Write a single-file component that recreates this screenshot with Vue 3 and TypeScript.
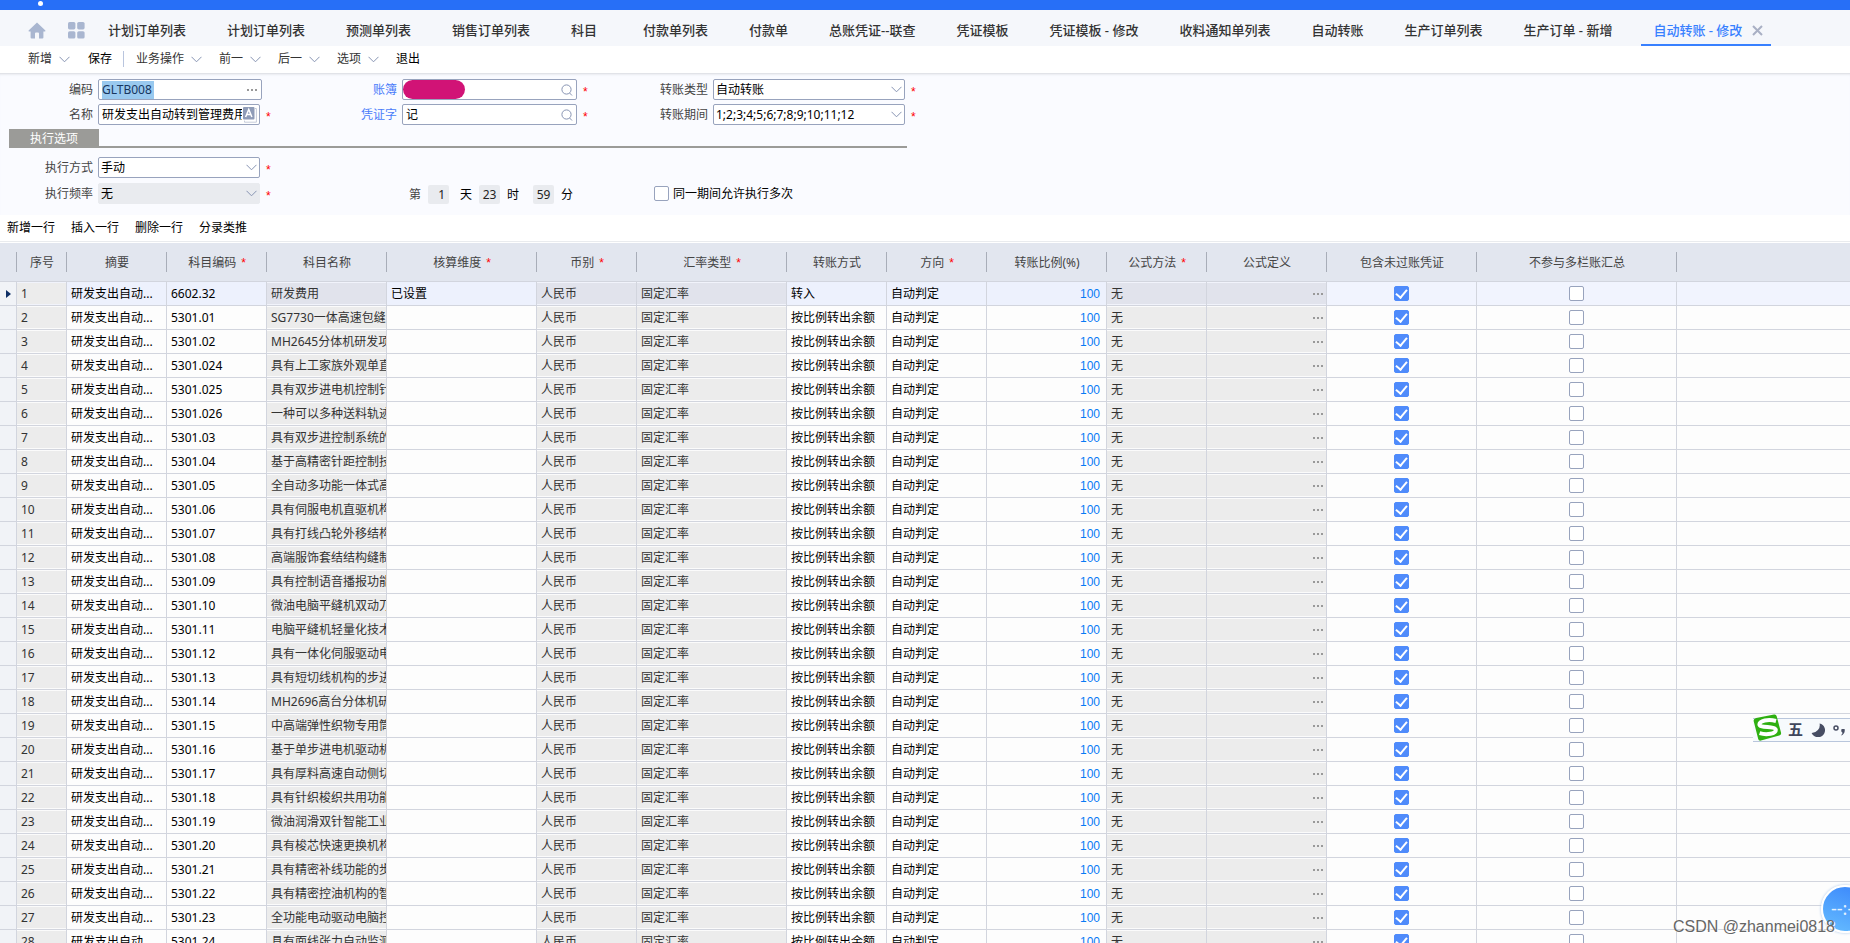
<script setup lang="ts">
import { ref } from 'vue'

interface Column {
  title: string
  width?: number
  required?: boolean
}

interface Entry {
  code: string
  name: string
  mode: string
  dimension: string
  includeUnposted: boolean
  excludeLedger: boolean
}

const tabs: string[] = [
  '计划订单列表', '计划订单列表', '预测单列表', '销售订单列表', '科目', '付款单列表', '付款单',
  '总账凭证--联查', '凭证模板', '凭证模板 - 修改', '收料通知单列表', '自动转账', '生产订单列表',
  '生产订单 - 新增', '自动转账 - 修改',
]
const activeTab = ref(tabs.length - 1)

const actions: { label: string; menu: boolean; divided?: boolean; strong?: boolean }[] = [
  { label: '新增', menu: true },
  { label: '保存', menu: false, divided: true, strong: true },
  { label: '业务操作', menu: true },
  { label: '前一', menu: true },
  { label: '后一', menu: true },
  { label: '选项', menu: true },
  { label: '退出', menu: false, strong: true },
]

const rowActions: string[] = ['新增一行', '插入一行', '删除一行', '分录类推']

const code = ref('GLTB008')
const title = ref('研发支出自动转到管理费用')
const book = ref('')
const voucher = ref('记')
const transferType = ref('自动转账')
const period = ref('1;2;3;4;5;6;7;8;9;10;11;12')
const execMode = ref('手动')
const frequency = ref('无')
const repeatable = ref(false)

const columns: Column[] = [
  { title: '序号', width: 50 },
  { title: '摘要', width: 100 },
  { title: '科目编码', width: 100, required: true },
  { title: '科目名称', width: 120 },
  { title: '核算维度', width: 150, required: true },
  { title: '币别', width: 100, required: true },
  { title: '汇率类型', width: 150, required: true },
  { title: '转账方式', width: 100 },
  { title: '方向', width: 100, required: true },
  { title: '转账比例(%)', width: 120 },
  { title: '公式方法', width: 100, required: true },
  { title: '公式定义', width: 120 },
  { title: '包含未过账凭证', width: 150 },
  { title: '不参与多栏账汇总', width: 200 },
]

const accounts: [string, string][] = [
  ['6602.32', '研发费用'],
  ['5301.01', 'SG7730一体高速包缝'],
  ['5301.02', 'MH2645分体机研发项'],
  ['5301.024', '具有上工家族外观单直'],
  ['5301.025', '具有双步进电机控制针'],
  ['5301.026', '一种可以多种送料轨迹'],
  ['5301.03', '具有双步进控制系统的'],
  ['5301.04', '基于高精密针距控制技'],
  ['5301.05', '全自动多功能一体式高'],
  ['5301.06', '具有伺服电机直驱机构'],
  ['5301.07', '具有打线凸轮外移结构'],
  ['5301.08', '高端服饰套结结构缝制'],
  ['5301.09', '具有控制语音播报功能'],
  ['5301.10', '微油电脑平缝机双动刀'],
  ['5301.11', '电脑平缝机轻量化技术'],
  ['5301.12', '具有一体化伺服驱动电'],
  ['5301.13', '具有短切线机构的步进'],
  ['5301.14', 'MH2696高台分体机研'],
  ['5301.15', '中高端弹性织物专用筒'],
  ['5301.16', '基于单步进电机驱动机'],
  ['5301.17', '具有厚料高速自动侧切'],
  ['5301.18', '具有针织梭织共用功能'],
  ['5301.19', '微油润滑双针智能工业'],
  ['5301.20', '具有梭芯快速更换机构'],
  ['5301.21', '具有精密补线功能的步'],
  ['5301.22', '具有精密控油机构的智'],
  ['5301.23', '全功能电动驱动电脑控'],
  ['5301.24', '具有面线张力自动监测'],
]

const entries = ref<Entry[]>(
  accounts.map(([accountCode, name], i) => ({
    code: accountCode,
    name,
    mode: i === 0 ? '转入' : '按比例转出余额',
    dimension: i === 0 ? '已设置' : '',
    includeUnposted: true,
    excludeLedger: false,
  })),
)
const current = ref(0)
</script>

<template>
  <div class="app">
    <div class="topbar"><span class="topbar-dot"></span></div>

    <nav class="tabs">
      <button class="nav-icon" type="button" aria-label="首页">
        <svg width="18" height="17" viewBox="0 0 18 17"><path d="M9 0.5 L17.4 8.4 Q17.8 9.4 16.8 9.4 H15.4 V15.4 Q15.4 16.4 14.4 16.4 H11 V11.6 Q11 10.6 10 10.6 H8 Q7 10.6 7 11.6 V16.4 H3.6 Q2.6 16.4 2.6 15.4 V9.4 H1.2 Q0.2 9.4 0.6 8.4 Z" /></svg>
      </button>
      <button class="nav-icon" type="button" aria-label="应用">
        <svg width="17" height="17" viewBox="0 0 17 17"><rect width="7.4" height="7.4" rx="1.6" /><rect x="9.2" width="7.4" height="7.4" rx="1.6" /><rect y="9.2" width="7.4" height="7.4" rx="1.6" /><rect x="9.2" y="9.2" width="7.4" height="7.4" rx="1.6" /></svg>
      </button>
      <div class="tab-list">
        <button v-for="(tab, i) in tabs" :key="i" type="button" class="tab" :class="{ active: i === activeTab }" @click="activeTab = i">
          {{ tab }}
          <svg v-if="i === activeTab" class="tab-close" width="11" height="11" viewBox="0 0 11 11"><path d="M1 1 L10 10 M10 1 L1 10" /></svg>
        </button>
      </div>
    </nav>

    <div class="toolbar">
      <button v-for="a in actions" :key="a.label" type="button" class="tool" :class="{ divided: a.divided, strong: a.strong }">
        {{ a.label }}
        <svg v-if="a.menu" class="chevron" width="11" height="7" viewBox="0 0 11 7"><path d="M0.5 0.8 L5.5 5.8 L10.5 0.8" /></svg>
      </button>
    </div>

    <form class="form" @submit.prevent>
      <div class="fields">
        <div class="field first">
          <label for="code">编码</label>
          <div class="control code">
            <input id="code" v-model="code" class="selected" type="text" />
            <button class="more" type="button" aria-label="更多"><i></i><i></i><i></i></button>
          </div>
        </div>
        <div class="field second">
          <label for="book" class="link">账簿</label>
          <div class="control">
            <span class="mask"></span>
            <input id="book" v-model="book" type="text" />
            <svg class="search" width="12" height="12" viewBox="0 0 12 12"><circle cx="5.5" cy="5.5" r="4.6" /><path d="M8.6 9 L11 11.5" /></svg>
          </div>
          <span class="star">*</span>
        </div>
        <div class="field third">
          <label for="type">转账类型</label>
          <div class="control">
            <select id="type" v-model="transferType"><option>自动转账</option></select>
            <svg class="chevron" width="11" height="7" viewBox="0 0 11 7"><path d="M0.5 0.8 L5.5 5.8 L10.5 0.8" /></svg>
          </div>
          <span class="star">*</span>
        </div>

        <div class="field first">
          <label for="title">名称</label>
          <div class="control name">
            <input id="title" v-model="title" type="text" />
            <svg class="lang" width="15" height="17" viewBox="0 0 15 17"><path class="lang-page" d="M13 2.5 H14.4 V16.2 H2.5 V14.6" /><rect x="1" y="1" width="11.5" height="12.5" rx="1" /><path class="lang-mark" d="M3.6 11 L6.75 3.4 L9.9 11 M4.8 8.4 H8.7" /></svg>
          </div>
          <span class="star">*</span>
        </div>
        <div class="field second">
          <label for="voucher" class="link">凭证字</label>
          <div class="control">
            <input id="voucher" v-model="voucher" type="text" />
            <svg class="search" width="12" height="12" viewBox="0 0 12 12"><circle cx="5.5" cy="5.5" r="4.6" /><path d="M8.6 9 L11 11.5" /></svg>
          </div>
          <span class="star">*</span>
        </div>
        <div class="field third">
          <label for="period">转账期间</label>
          <div class="control">
            <select id="period" v-model="period"><option>1;2;3;4;5;6;7;8;9;10;11;12</option></select>
            <svg class="chevron" width="11" height="7" viewBox="0 0 11 7"><path d="M0.5 0.8 L5.5 5.8 L10.5 0.8" /></svg>
          </div>
          <span class="star">*</span>
        </div>
      </div>

      <div class="section"><h2>执行选项</h2></div>

      <div class="fields options">
        <div class="field first">
          <label for="mode">执行方式</label>
          <div class="control">
            <select id="mode" v-model="execMode"><option>手动</option></select>
            <svg class="chevron" width="11" height="7" viewBox="0 0 11 7"><path d="M0.5 0.8 L5.5 5.8 L10.5 0.8" /></svg>
          </div>
          <span class="star">*</span>
        </div>
        <div class="field first frequency">
          <label for="frequency">执行频率</label>
          <div class="control disabled">
            <select id="frequency" v-model="frequency" disabled><option>无</option></select>
            <svg class="chevron" width="11" height="7" viewBox="0 0 11 7"><path d="M0.5 0.8 L5.5 5.8 L10.5 0.8" /></svg>
          </div>
          <span class="star">*</span>
        </div>
        <div class="schedule">
          <span class="unit muted">第</span>
          <input class="num end" type="text" value="1" aria-label="天" readonly />
          <span class="unit">天</span>
          <input class="num" type="text" value="23" aria-label="时" readonly />
          <span class="unit hour">时</span>
          <input class="num" type="text" value="59" aria-label="分" readonly />
          <span class="unit">分</span>
        </div>
        <label class="repeat"><input v-model="repeatable" type="checkbox" class="tick" />同一期间允许执行多次</label>
      </div>
    </form>

    <div class="row-actions">
      <button v-for="a in rowActions" :key="a" type="button">{{ a }}</button>
    </div>

    <div class="grid">
      <table>
        <colgroup>
          <col class="col-mark" />
          <col v-for="c in columns" :key="c.title" :style="{ width: c.width + 'px' }" />
          <col />
        </colgroup>
        <thead>
          <tr>
            <th></th>
            <th v-for="c in columns" :key="c.title"><span>{{ c.title }}<b v-if="c.required">*</b></span></th>
            <th class="rest"></th>
          </tr>
        </thead>
        <tbody>
          <tr v-for="(e, i) in entries" :key="e.code" :class="{ current: i === current }" @click="current = i">
            <td class="mark"><svg v-if="i === current" width="5" height="8" viewBox="0 0 5 8"><path d="M0 0 L5 4 L0 8 Z" /></svg></td>
            <td class="locked index">{{ i + 1 }}</td>
            <td class="edit">研发支出自动...</td>
            <td class="edit">{{ e.code }}</td>
            <td class="locked">{{ e.name }}</td>
            <td class="edit">{{ e.dimension }}</td>
            <td class="locked">人民币</td>
            <td class="locked">固定汇率</td>
            <td class="edit">{{ e.mode }}</td>
            <td class="edit">自动判定</td>
            <td class="ratio">100</td>
            <td class="locked">无</td>
            <td class="locked formula"><button class="more" type="button" aria-label="公式定义"><i></i><i></i><i></i></button></td>
            <td class="check"><input v-model="e.includeUnposted" type="checkbox" class="tick" aria-label="包含未过账凭证" /></td>
            <td class="check"><input v-model="e.excludeLedger" type="checkbox" class="tick" aria-label="不参与多栏账汇总" /></td>
            <td class="rest"></td>
          </tr>
        </tbody>
      </table>
    </div>

    <div class="ime">
      <svg class="ime-logo" width="29" height="28" viewBox="0 0 29 28"><path class="ime-tile" d="M3.2 4 L21 0.6 Q23.2 0.2 23.7 2.2 L28 18.6 Q28.6 21 26.2 21.6 L8 26.6 Q5.8 27.2 5.2 25 L0.7 7.2 Q0.2 4.6 3.2 4 Z" /><path class="ime-curve" d="M23 7 C15 4.8 6.6 6.8 6.4 10.4 C6.2 14.4 22.4 11.8 22.8 15.8 C23 19.8 13.6 21.4 6.6 19.2" /></svg>
      <span class="ime-text">五</span>
      <svg width="14" height="14" viewBox="0 0 14 14"><path class="ime-ink" d="M8.6 0.4 A7 7 0 1 1 0.6 10 A8 8 0 0 0 8.6 0.4 Z" /></svg>
      <svg width="13" height="13" viewBox="0 0 13 13"><circle class="ime-ring" cx="3" cy="4" r="2" /><path class="ime-ink" d="M8.6 5 H11.6 Q12.6 8.6 8.8 11.6 L8.2 11 Q9.8 9.6 9.4 8.4 Q7.6 8 8.6 5 Z" /></svg>
    </div>
    <div class="bubble">--:--</div>
    <div class="credit">CSDN @zhanmei0818</div>
  </div>
</template>

<style>
html,
body {
  overflow: hidden;
}
</style>

<style scoped>
.app {
  position: relative;
  display: flex;
  flex-direction: column;
  height: 100vh;
  overflow: hidden;
  background: #fff;
  color: #000;
  font: 12px/16px "Noto Sans", "Noto Sans CJK SC", sans-serif;
}
.app * {
  box-sizing: border-box;
}
button,
input,
select {
  margin: 0;
  padding: 0;
  border: 0;
  background: none;
  color: inherit;
  font: inherit;
}
svg {
  flex: none;
}
.topbar {
  flex: none;
  height: 10px;
  padding: 1px 0 0 38px;
  background: #276ff7;
}
.topbar-dot {
  display: block;
  width: 5px;
  height: 5px;
  border-radius: 50%;
  background: #fff;
}
.tabs {
  flex: none;
  display: flex;
  align-items: center;
  height: 36px;
  padding-left: 28px;
  background: #f5f7fb;
}
.nav-icon {
  display: flex;
  margin-right: 22px;
  padding-top: 4px;
  fill: #a9b6d0;
}
.nav-icon + .nav-icon {
  margin-right: 0;
}
.tab-list {
  display: flex;
  gap: 1px;
  height: 100%;
  margin-left: 11px;
}
.tab {
  display: flex;
  align-items: center;
  min-width: 71px;
  padding: 6px 28px 0 12px;
  border-bottom: 2px solid transparent;
  color: #333;
  font-size: 13px;
  font-weight: 500;
  line-height: 20px;
  white-space: nowrap;
}
.tab.active {
  padding-right: 8px;
  border-color: #3880ff;
  color: #3880ff;
}
.tab-close {
  margin-left: 10px;
  stroke: #a9b0c4;
  stroke-width: 2;
}
.toolbar {
  flex: none;
  display: flex;
  align-items: center;
  gap: 17px;
  height: 28px;
  padding: 0 0 1px 28px;
  border-bottom: 1px solid #e1e3e8;
  color: #333;
}
.tool {
  display: flex;
  align-items: center;
  gap: 7px;
}
.tool.strong {
  color: #000;
}
.tool.divided {
  padding-right: 11px;
  margin: 0 -5px 0 1px;
  border-right: 1px solid #b9c5de;
}
.chevron,
.search {
  fill: none;
  stroke: #8794b3;
}
.form {
  flex: none;
  padding: 5px 0 11px;
  background: #fafbff;
  box-shadow: inset 0 2px 2px -1px #e9ebf0;
}
.fields {
  display: grid;
  grid-template-columns: 276px 316px auto;
  justify-content: start;
  row-gap: 4px;
}
.fields.options {
  row-gap: 5px;
  margin-top: 9px;
}
.field {
  display: flex;
  align-items: center;
  gap: 5px;
}
.field label {
  flex: none;
  width: 93px;
  color: #444;
  text-align: right;
}
.field.second label {
  width: 121px;
}
.field.third label {
  width: 116px;
}
.field label.link {
  color: #4a7dfa;
}
.control {
  display: flex;
  align-items: center;
  width: 162px;
  height: 21px;
  padding: 0 2px 0 3px;
  border: 1px solid #98a3bd;
  border-radius: 2px;
  background: #fff;
}
.control.code {
  justify-content: space-between;
  width: 164px;
  padding-right: 4px;
}
.second .control {
  width: 175px;
}
.third .control {
  width: 192px;
}
.control.disabled {
  border-color: #e9ebef;
  background: #e9ebef;
}
.control input,
.control select {
  flex: 1;
  width: 0;
  height: 16px;
  appearance: none;
  outline: 0;
  opacity: 1;
}
.control select {
  margin-left: -1px;
}
.control input.selected {
  flex: none;
  width: 52px;
  height: 18px;
  background: #99c9ef;
  color: #17365f;
}
.mask {
  flex: none;
  width: 62px;
  height: 19px;
  margin-left: -3px;
  border-radius: 10px;
  background: #d11376;
}
.search {
  margin-right: 1px;
}
.more {
  display: flex;
  gap: 2px;
  padding: 4px 0;
}
.more i {
  width: 2px;
  height: 2px;
  background: #999;
}
.lang {
  fill: #8f9cb8;
}
.lang-page {
  fill: none;
  stroke: #c5cbd9;
}
.lang-mark {
  fill: none;
  stroke: #fff;
  stroke-width: 1.5;
}
.star,
th b {
  color: #f00;
  font-family: "Liberation Sans", Arial, sans-serif;
  font-weight: 400;
}
.star {
  padding-top: 5px;
  margin-left: 1px;
}
.section {
  display: flex;
  width: 898px;
  margin: 4px 0 0 9px;
  border-bottom: 2px solid #9b9b98;
}
.section h2 {
  width: 90px;
  height: 17px;
  margin: 0;
  background: #9b9b98;
  color: #fff;
  font: inherit;
  line-height: 19px;
  text-align: center;
}
.frequency {
  grid-column: 1;
}
.schedule {
  display: flex;
  align-items: center;
  gap: 7px;
  padding: 2px 0 0 133px;
}
.unit {
  width: 12px;
}
.unit.muted {
  color: #444;
}
.unit.hour {
  margin-right: 7px;
}
.num {
  width: 21px;
  height: 19px;
  border-radius: 2px;
  background: #e9ebef;
  color: #222;
  text-align: center;
}
.num.end {
  margin-right: 4px;
  padding-right: 4px;
  text-align: right;
}
.repeat {
  display: flex;
  align-items: center;
  gap: 4px;
  padding-left: 62px;
}
.tick {
  display: block;
  flex: none;
  width: 15px;
  height: 15px;
  appearance: none;
  border: 1px solid #98a3bd;
  border-radius: 2px;
  background: #fff;
}
.tick:checked {
  border-color: #4f8bfb;
  background: #4f8bfb;
}
.tick:checked::after {
  content: "";
  display: block;
  width: 5px;
  height: 9px;
  margin: 0 auto;
  border: solid #fff;
  border-width: 0 2px 2px 0;
  transform: rotate(40deg);
}
.row-actions {
  flex: none;
  display: flex;
  gap: 16px;
  height: 27px;
  padding-left: 7px;
  border-bottom: 1px solid #e9ebee;
}
.grid {
  flex: 1;
  min-height: 0;
  margin-top: 1px;
  overflow: hidden;
}
table {
  width: 100%;
  table-layout: fixed;
  border-collapse: separate;
  border-spacing: 0;
}
.col-mark {
  width: 17px;
}
th {
  height: 39px;
  padding: 0;
  border-bottom: 1px solid #d2d5de;
  background: #e2e6ef;
  color: #444;
  font-weight: 400;
}
th::after {
  content: "";
  display: block;
  height: 20px;
  margin-top: -21px;
  border-right: 1px solid #a8adb8;
}
th:first-child::after {
  margin-top: 0;
}
th.rest::after {
  display: none;
}
th span {
  display: block;
  padding-top: 1px;
  line-height: 20px;
}
th b {
  margin-left: 5px;
}
td {
  height: 24px;
  padding: 0 0 0 4px;
  border-right: 1px solid #d2d5de;
  border-bottom: 1px solid #d2d5de;
  background: #fdfdfd;
  overflow: hidden;
  white-space: nowrap;
}
td.rest {
  border-right: 0;
}
td.locked,
td.ratio {
  padding-top: 1px;
}
td.locked {
  background: #ececec;
  box-shadow: inset 0 1px #fbfbfb, inset 0 -1px #fbfbfb;
  color: #333;
}
td.mark {
  padding: 0 0 0 6px;
  background: #f1f3f7;
}
td.mark svg {
  display: block;
  fill: #0f2f66;
}
td.ratio {
  padding-right: 6px;
  color: #087af5;
  font-family: "Liberation Sans", Arial, sans-serif;
  text-align: right;
}
td.formula .more {
  margin: 0 3px 0 auto;
}
td.check {
  padding: 0 1px 0 0;
}
td.check .tick {
  margin: 0 auto;
}
tr.current .edit,
tr.current .ratio {
  background: #edf1fd;
}
tr.current .check,
tr.current .rest {
  background: #f1f4fe;
}
tr.current .locked {
  background: #e1e3ec;
  box-shadow: inset 0 1px #f1f3fb, inset 0 -1px #f1f3fb;
}
tr.current .index {
  background: #ececec;
}
.ime {
  position: absolute;
  top: 718px;
  right: 0;
  display: flex;
  align-items: center;
  gap: 8px;
  height: 24px;
  padding-right: 4px;
  border: solid #b9c6dc;
  border-width: 1px 0;
  background: #f7fafd;
}
.ime-logo {
  margin: -4px -2px 0 0;
}
.ime-tile {
  fill: #2fb011;
}
.ime-curve {
  fill: none;
  stroke: #fff;
  stroke-width: 4;
}
.ime-text {
  padding-bottom: 2px;
  color: #3f465c;
  font-size: 15px;
  font-weight: 700;
}
.ime-ink {
  fill: #474d63;
}
.ime-ring {
  fill: none;
  stroke: #474d63;
  stroke-width: 1.5;
}
.bubble {
  position: absolute;
  right: -19px;
  bottom: 10px;
  width: 48px;
  height: 48px;
  border: 2px solid #fff;
  border-radius: 50%;
  background: linear-gradient(200deg, #3a86fb, #66bdff);
  box-shadow: 0 0 3px #a9c6e8;
  color: #e4f2ff;
  font-size: 18px;
  line-height: 42px;
  text-align: center;
}
.credit {
  position: absolute;
  right: 15px;
  bottom: 6px;
  color: #666;
  font: 16px/20px "Liberation Sans", Arial, sans-serif;
  text-shadow: 1px 1px #fff;
}
</style>
